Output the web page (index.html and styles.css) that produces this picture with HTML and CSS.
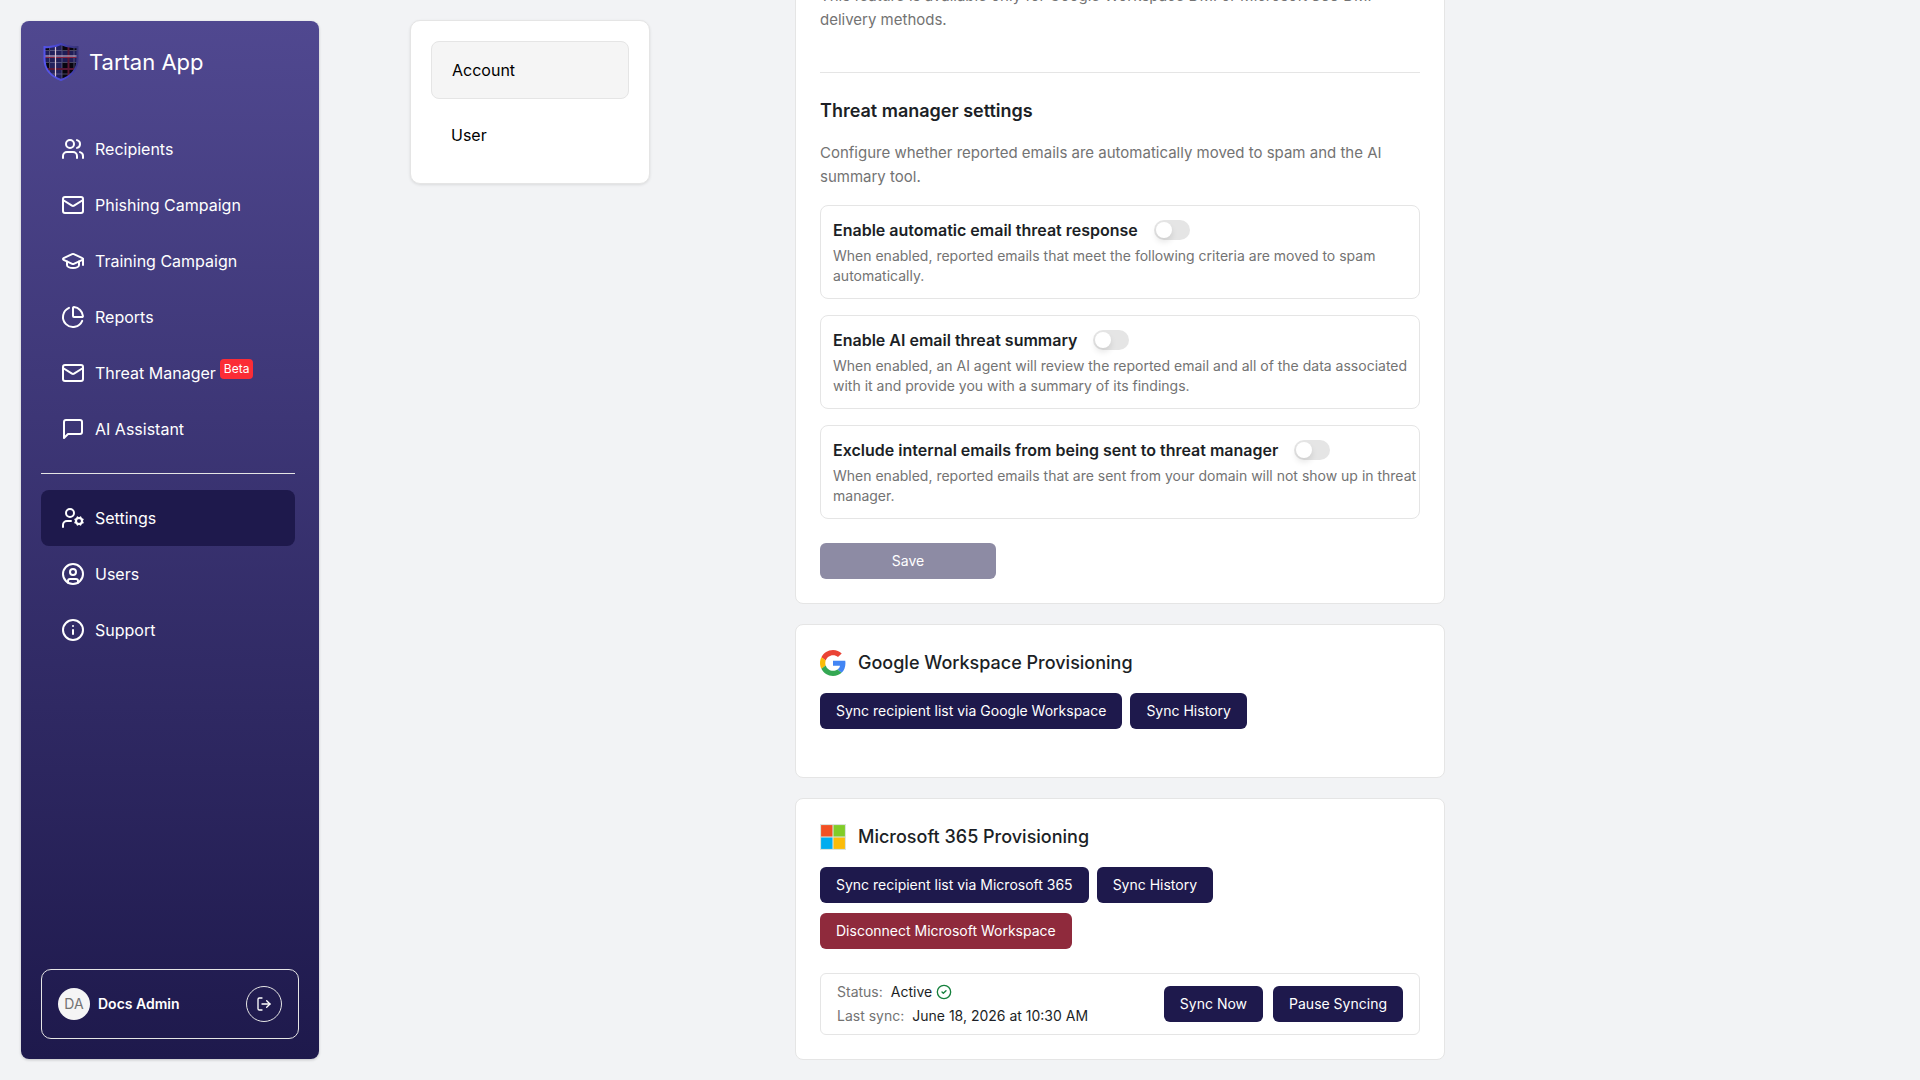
FILE: index.html
```html
<!DOCTYPE html>
<html lang="en">
<head>
    <meta charset="UTF-8">
    <title>Tartan App</title>
    <meta name="viewport" content="width=device-width, initial-scale=1.0">
    <link rel="stylesheet" href="styles.css">
</head>
<body>
    <!-- Sidebar -->
    <aside class="sidebar">
        <a class="brand" href="#">
            <svg class="brand-logo" viewBox="0 0 36 38" aria-hidden="true">
                <defs>
                    <clipPath id="shield">
                        <path d="M18 1 C13 3.500 7 4.500 1.500 4 V16 C1.500 26 8 33.500 18 37 C28 33.500 34.500 26 34.500 16 V4 C29 4.500 23 3.500 18 1 Z"/>
                    </clipPath>
                    <linearGradient id="rim" x1="0" x2="1" y1="0.600" y2="0.300">
                        <stop offset="0" stop-color="#5656f0"/>
                        <stop offset="0.500" stop-color="#4a48d0"/>
                        <stop offset="1" stop-color="#38347c"/>
                    </linearGradient>
                </defs>
                <g clip-path="url(#shield)">
                    <rect width="36" height="38" fill="#08060f"/>
                    <path d="M7 2h12v12H7zM7 19h12v19H7z" fill="#24225c"/>
                    <path d="M0 8h7v11H0zM19 8h17v11H19zM7 14h12v5H7z" fill="#211e58"/>
                    <path d="M0 7.500h36M0 19.500h36M0 31h36M6.500 0v38M19 0v38M31 0v38" stroke="#77739a" stroke-width="1" opacity="0.600"/>
                    <path d="M0 26h36M25.500 0v38" stroke="#5a1734" stroke-width="2"/>
                    <path d="M0 14.500h36" stroke="#8c2340" stroke-width="1"/>
                    <path d="M0 13h36M12.500 0v38" stroke="#dcc6d6" stroke-width="1.200"/>
                </g>
                <path d="M18 1 C13 3.500 7 4.500 1.500 4 V16 C1.500 26 8 33.500 18 37 C28 33.500 34.500 26 34.500 16 V4 C29 4.500 23 3.500 18 1 Z" fill="none" stroke="url(#rim)" stroke-width="2"/>
            </svg>
            <span>Tartan App</span>
        </a>

        <nav class="nav">
            <a class="nav-link" href="#">
                <svg class="icon" viewBox="0 0 24 24"><path d="M16 21v-2a4 4 0 0 0-4-4H6a4 4 0 0 0-4 4v2"/><circle cx="9" cy="7" r="4"/><path d="M22 21v-2a4 4 0 0 0-3-3.870"/><path d="M16 3.130a4 4 0 0 1 0 7.750"/></svg>
                Recipients
            </a>
            <a class="nav-link" href="#">
                <svg class="icon" viewBox="0 0 24 24"><rect x="2" y="4" width="20" height="16" rx="2"/><path d="m22 7-8.970 5.700a1.940 1.940 0 0 1-2.060 0L2 7"/></svg>
                Phishing Campaign
            </a>
            <a class="nav-link" href="#">
                <svg class="icon" viewBox="0 0 24 24"><path d="M21.420 10.922a1 1 0 0 0-.019-1.838L12.830 5.180a2 2 0 0 0-1.660 0L2.600 9.080a1 1 0 0 0 0 1.832l8.570 3.908a2 2 0 0 0 1.660 0z"/><path d="M22 10v6"/><path d="M6 12.500V16a6 3 0 0 0 12 0v-3.500"/></svg>
                Training Campaign
            </a>
            <a class="nav-link" href="#">
                <svg class="icon" viewBox="0 0 24 24"><path d="M21 12c.552 0 1.005-.449.950-.998a10 10 0 0 0-8.953-8.951c-.550-.055-.998.398-.998.950v8a1 1 0 0 0 1 1z"/><path d="M21.210 15.890A10 10 0 1 1 8 2.830"/></svg>
                Reports
            </a>
            <a class="nav-link" href="#">
                <svg class="icon" viewBox="0 0 24 24"><rect x="2" y="4" width="20" height="16" rx="2"/><path d="m22 7-8.970 5.700a1.940 1.940 0 0 1-2.060 0L2 7"/></svg>
                <span class="nav-text">Threat Manager <span class="beta">Beta</span></span>
            </a>
            <a class="nav-link" href="#">
                <svg class="icon" viewBox="0 0 24 24"><path d="M21 15a2 2 0 0 1-2 2H7l-4 4V5a2 2 0 0 1 2-2h14a2 2 0 0 1 2 2z"/></svg>
                AI Assistant
            </a>
            <hr class="nav-divider">
            <a class="nav-link active" href="#">
                <svg class="icon" viewBox="0 0 24 24"><path d="M10 15H6a4 4 0 0 0-4 4v2"/><path d="m14.305 16.530.923-.382"/><path d="m15.228 13.852-.923-.383"/><path d="m16.852 12.228-.383-.923"/><path d="m16.852 17.772-.383.924"/><path d="m19.148 12.228.383-.923"/><path d="m19.530 18.696-.382-.924"/><path d="m20.772 13.852.924-.383"/><path d="m20.772 16.148.924.383"/><circle cx="18" cy="15" r="3"/><circle cx="9" cy="7" r="4"/></svg>
                Settings
            </a>
            <a class="nav-link" href="#">
                <svg class="icon" viewBox="0 0 24 24"><circle cx="12" cy="12" r="10"/><circle cx="12" cy="10" r="3"/><path d="M7 20.662V19a2 2 0 0 1 2-2h6a2 2 0 0 1 2 2v1.662"/></svg>
                Users
            </a>
            <a class="nav-link" href="#">
                <svg class="icon" viewBox="0 0 24 24"><circle cx="12" cy="12" r="10"/><path d="M12 16v-4"/><path d="M12 8h.010"/></svg>
                Support
            </a>
        </nav>

        <div class="account">
            <span class="avatar">DA</span>
            <span class="account-name">Docs Admin</span>
            <button class="logout" type="button" aria-label="Log out">
                <svg viewBox="0 0 24 24"><path d="M9 21H5a2 2 0 0 1-2-2V5a2 2 0 0 1 2-2h4"/><path d="m16 17 5-5-5-5"/><path d="M21 12H9"/></svg>
            </button>
        </div>
    </aside>

    <main class="main">
        <!-- Settings tabs -->
        <nav class="tabs">
            <a class="tab active" href="#">Account</a>
            <a class="tab" href="#">User</a>
        </nav>

        <div class="content">
            <section class="card">
                <p class="lead">This feature is available only for Google Workspace DMI or Microsoft 365 DMI delivery methods.</p>
                <hr class="divider">
                <h2>Threat manager settings</h2>
                <p class="lead">Configure whether reported emails are automatically moved to spam and the AI summary tool.</p>

                <div class="options">
                    <div class="option">
                        <div class="option-head">
                            <label for="auto-response">Enable automatic email threat response</label>
                            <input class="switch" type="checkbox" role="switch" id="auto-response">
                        </div>
                        <p>When enabled, reported emails that meet the following criteria are moved to spam automatically.</p>
                    </div>
                    <div class="option">
                        <div class="option-head">
                            <label for="ai-summary">Enable AI email threat summary</label>
                            <input class="switch" type="checkbox" role="switch" id="ai-summary">
                        </div>
                        <p>When enabled, an AI agent will review the reported email and all of the data associated with it and provide you with a summary of its findings.</p>
                    </div>
                    <div class="option">
                        <div class="option-head">
                            <label for="exclude-internal">Exclude internal emails from being sent to threat manager</label>
                            <input class="switch" type="checkbox" role="switch" id="exclude-internal">
                        </div>
                        <p>When enabled, reported emails that are sent from your domain will not show up in threat manager.</p>
                    </div>
                </div>
                <button class="btn btn-save" type="button" disabled>Save</button>
            </section>

            <section class="card card-google">
                <div class="card-title">
                    <svg viewBox="0 0 48 48" aria-hidden="true"><path fill="#ea4335" d="M24 9.500c3.540 0 6.710 1.220 9.210 3.600l6.850-6.850C35.900 2.380 30.470 0 24 0 14.620 0 6.510 5.380 2.560 13.220l7.980 6.190C12.430 13.720 17.740 9.500 24 9.500z"/><path fill="#4285f4" d="M46.980 24.550c0-1.570-.15-3.090-.38-4.550H24v9.020h12.940c-.58 2.960-2.260 5.480-4.780 7.180l7.730 6c4.510-4.180 7.090-10.360 7.090-17.650z"/><path fill="#fbbc05" d="M10.530 28.590c-.48-1.450-.76-2.990-.76-4.590s.27-3.140.76-4.590l-7.980-6.190C.92 16.460 0 20.120 0 24c0 3.880.92 7.540 2.560 10.780l7.970-6.190z"/><path fill="#34a853" d="M24 48c6.480 0 11.930-2.130 15.890-5.810l-7.730-6c-2.150 1.450-4.920 2.300-8.160 2.300-6.260 0-11.570-4.220-13.470-9.910l-7.980 6.190C6.510 42.620 14.620 48 24 48z"/></svg>
                    <h2>Google Workspace Provisioning</h2>
                </div>
                <div class="actions">
                    <button class="btn" type="button">Sync recipient list via Google Workspace</button>
                    <button class="btn" type="button">Sync History</button>
                </div>
            </section>

            <section class="card">
                <div class="card-title">
                    <svg viewBox="0 0 24 24" aria-hidden="true"><path fill="#d9e3dc" d="M0 0h24v24H0z"/><path fill="#f25022" d="M1 1h10.500v10.500H1z"/><path fill="#80cc28" d="M12.500 1H23v10.500H12.500z"/><path fill="#00adef" d="M1 12.500h10.500V23H1z"/><path fill="#fbbc09" d="M12.500 12.500H23V23H12.500z"/></svg>
                    <h2>Microsoft 365 Provisioning</h2>
                </div>
                <div class="actions">
                    <button class="btn" type="button">Sync recipient list via Microsoft 365</button>
                    <button class="btn" type="button">Sync History</button>
                    <button class="btn btn-danger" type="button">Disconnect Microsoft Workspace</button>
                </div>
                <div class="status">
                    <dl>
                        <div><dt>Status:</dt><dd>Active <svg viewBox="0 0 24 24" aria-hidden="true"><circle cx="12" cy="12" r="10"/><path d="m9 12 2 2 4-4"/></svg></dd></div>
                        <div><dt>Last sync:</dt><dd>June 18, 2026 at 10:30 AM</dd></div>
                    </dl>
                    <div class="status-actions">
                        <button class="btn" type="button">Sync Now</button>
                        <button class="btn" type="button">Pause Syncing</button>
                    </div>
                </div>
            </section>
        </div>
    </main>
</body>
</html>
```
FILE: styles.css
```css
:root {
    --navy: #1e194c;
    --line: #e5e5e5;
    --text: #1c1f26;
    --muted: #737373;
}

* {
    box-sizing: border-box;
}

body {
    margin: 0;
    height: 100vh;
    display: flex;
    overflow: hidden;
    background: #f2f3f5;
    color: var(--text);
    font-family: Inter, "Liberation Sans", sans-serif;
    font-size: 16px;
    line-height: 24px;
}

h2, p, dl, dd {
    margin: 0;
}

a {
    color: inherit;
    text-decoration: none;
}

button {
    font: inherit;
    cursor: pointer;
}

/* Sidebar */
.sidebar {
    width: 298px;
    flex-shrink: 0;
    margin: 21px;
    padding: 20px;
    display: flex;
    flex-direction: column;
    border-radius: 8px;
    background: linear-gradient(#504890, var(--navy));
    box-shadow: 0 1px 3px rgba(0, 0, 0, 0.2);
    color: white;
}

.brand {
    display: flex;
    align-items: center;
    gap: 10px;
    height: 42px;
    padding-left: 2px;
    margin-bottom: 38px;
    font-size: 22px;
}

.brand-logo {
    width: 36px;
    height: 38px;
}

.nav {
    flex: 1;
    margin-right: 4px;
}

.nav-link {
    display: flex;
    align-items: center;
    gap: 10px;
    height: 56px;
    padding: 0 20px;
    border-radius: 8px;
}

.nav-link.active {
    background: var(--navy);
}

.icon {
    width: 24px;
    height: 24px;
}

.icon, .logout svg, .status svg {
    fill: none;
    stroke: currentColor;
    stroke-width: 2;
    stroke-linecap: round;
    stroke-linejoin: round;
}

.nav-text {
    display: flex;
    gap: 4px;
}

.beta {
    align-self: flex-start;
    padding: 0 4px;
    border-radius: 4px;
    background: #fb2c36;
    font-size: 12px;
    line-height: 20px;
    margin-top: -2px;
}

.nav-divider {
    margin: 16px 0;
    border: 0;
    border-top: 1px solid var(--line);
}

.account {
    display: flex;
    align-items: center;
    gap: 8px;
    height: 70px;
    padding: 0 16px;
    border: 1px solid var(--line);
    border-radius: 10px;
    font-size: 14px;
}

.avatar {
    width: 32px;
    height: 32px;
    border-radius: 50%;
    background: #f5f5f5;
    color: var(--muted);
    line-height: 32px;
    text-align: center;
}

.account-name {
    flex: 1;
    font-weight: 600;
}

.logout {
    display: grid;
    place-items: center;
    width: 36px;
    height: 36px;
    padding: 0;
    border: 1px solid var(--line);
    border-radius: 50%;
    background: none;
    color: white;
}

.logout svg {
    width: 16px;
    height: 16px;
}

/* Main area */
.main {
    flex: 1;
    height: 100vh;
    display: grid;
    grid-template-columns: 1fr minmax(0, 650px) 1fr;
    padding: 20px 20px 20px 0;
}

.tabs {
    justify-self: start;
    align-self: start;
    width: 240px;
    margin-left: 70px;
    padding: 20px;
    display: flex;
    flex-direction: column;
    gap: 8px;
    border: 1px solid var(--line);
    border-radius: 10px;
    background: white;
    box-shadow: 0 1px 3px rgba(0, 0, 0, 0.1);
    color: black;
}

.tab {
    padding: 16px 20px;
    border-radius: 8px;
}

.tab.active {
    border: 1px solid var(--line);
    background: #f5f5f5;
}

/* Cards, scrolled to the bottom */
.content {
    min-height: 0;
    display: flex;
    flex-direction: column;
    justify-content: flex-end;
    gap: 20px;
}

.card {
    padding: 24px;
    border: 1px solid var(--line);
    border-radius: 8px;
    background: white;
}

.card-google {
    padding-bottom: 48px;
}

.card h2 {
    font-size: 18px;
    font-weight: 600;
    line-height: 28px;
}

.lead {
    color: var(--muted);
    font-size: 15px;
}

.divider {
    margin: 40px 0 24px;
    border: 0;
    border-top: 1px solid var(--line);
}

.divider + h2 {
    margin-bottom: 16px;
}

.options {
    display: flex;
    flex-direction: column;
    gap: 16px;
    margin: 16px 0 24px;
}

.option {
    padding: 12px 0 12px 12px;
    border: 1px solid var(--line);
    border-radius: 8px;
}

.option-head {
    display: flex;
    align-items: center;
    gap: 16px;
    margin-bottom: 4px;
    font-weight: 600;
}

.option p {
    color: var(--muted);
    font-size: 14px;
    line-height: 20px;
}

.switch {
    appearance: none;
    width: 36px;
    height: 20px;
    margin: 0;
    padding: 2px;
    border-radius: 10px;
    background: var(--line);
    cursor: pointer;
}

.switch::before {
    content: '';
    display: block;
    width: 16px;
    height: 16px;
    border-radius: 50%;
    background: white;
    box-shadow: 0 4px 6px rgba(0, 0, 0, 0.1);
}

.switch:checked {
    background: var(--navy);
}

.switch:checked::before {
    margin-left: auto;
}

.btn {
    height: 36px;
    padding: 0 16px;
    border: 0;
    border-radius: 6px;
    background: var(--navy);
    color: white;
    font-size: 14px;
    white-space: nowrap;
}

.btn-save {
    width: 176px;
}

.btn:disabled {
    opacity: 0.5;
}

.btn-danger {
    background: #8f2a3c;
}

.card-title {
    display: flex;
    align-items: center;
    gap: 12px;
    margin-bottom: 16px;
}

.card-title h2 {
    font-weight: 500;
}

.card-title svg {
    width: 26px;
    height: 26px;
}

.actions {
    display: flex;
    flex-wrap: wrap;
    gap: 10px 8px;
    padding-right: 120px;
}

/* Sync status */
.status {
    display: flex;
    align-items: center;
    justify-content: space-between;
    margin-top: 24px;
    padding: 6px 16px;
    border: 1px solid var(--line);
    border-radius: 6px;
    font-size: 14px;
}

.status dl div {
    display: flex;
    gap: 8px;
}

.status dt {
    color: var(--muted);
}

.status dd {
    display: flex;
    align-items: center;
    gap: 4px;
}

.status svg {
    width: 16px;
    height: 16px;
    color: #15803d;
}

.status-actions {
    display: flex;
    gap: 10px;
}
```
